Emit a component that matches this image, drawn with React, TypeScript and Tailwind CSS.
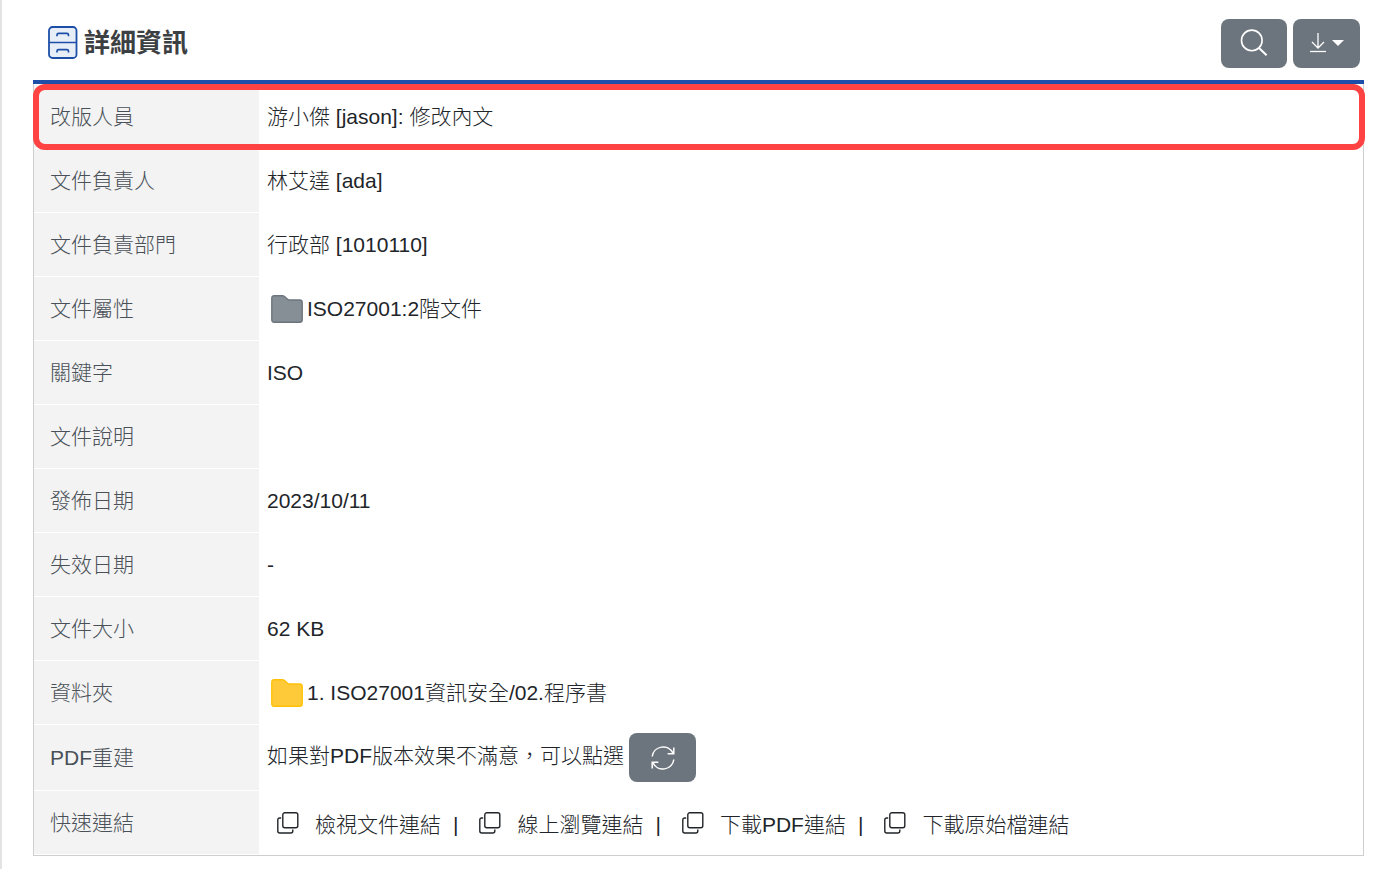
import React from "react";

type FolderProps = { fill: string; stroke: string };
type RowProps = { label: string; children?: React.ReactNode };

function Cabinet() {
  return (
    <svg width="30" height="34" viewBox="0 0 30 34" fill="none" aria-hidden="true">
      <rect x="1" y="1" width="27.5" height="31" rx="3.5" fill="#e8eef8" stroke="#1d4fa8" strokeWidth="1.8" />
      <path d="M1 16.5h27.5" stroke="#1d4fa8" strokeWidth="1.5" />
      <path
        d="M9 10.2V9q0-1.6 1.6-1.6h8.3q1.6 0 1.6 1.6v1.2M9 26.5v-1.2q0-1.6 1.6-1.6h8.3q1.6 0 1.6 1.6v1.2"
        stroke="#1d4fa8"
        strokeWidth="1.7"
      />
    </svg>
  );
}

function Folder({ fill, stroke }: FolderProps) {
  return (
    <svg className="shrink-0" width="32" height="28" viewBox="0 0 32 28" aria-hidden="true">
      <path
        d="M.8 3.2Q.8.7 3.3.7h8q1.3 0 2.2.8l3.1 2.7q.9.8 2.2.8h9.9q2.5 0 2.5 2.5v17.3q0 2.5-2.5 2.5H3.3Q.8 27.3.8 24.8z"
        fill={fill}
        stroke={stroke}
        strokeWidth="1.4"
      />
    </svg>
  );
}

function Copy() {
  return (
    <svg className="mb-1 shrink-0" width="22" height="22" viewBox="0 0 22 22" fill="none" stroke="#212529" strokeWidth="1.4" aria-hidden="true">
      <rect x="5.8" y=".8" width="15" height="15" rx="2" />
      <path d="M4.2 6H2.8Q.8 6 .8 8v11q0 2 2 2h11q2 0 2-2v-1.4" />
    </svg>
  );
}

function Row({ label, children }: RowProps) {
  return (
    <tr>
      <th
        scope="row"
        className="h-16 w-[225px] px-4 text-left font-light text-[#495057] bg-[#f3f3f3] border-b border-white"
      >
        {label}
      </th>
      <td className="h-16 px-2 border-b border-white">{children}</td>
    </tr>
  );
}

const links = ["檢視文件連結", "線上瀏覽連結", "下載PDF連結", "下載原始檔連結"];

function App() {
  return (
    <div
      lang="zh-Hant"
      className="min-h-screen border-l-2 border-[#e3e3e3] bg-white pl-[31px] pr-9 text-[21px] leading-8 font-light text-[#212529] font-['Liberation_Sans','Noto_Sans_CJK_TC',sans-serif]"
    >
      <header className="flex h-[84px] items-center justify-between border-b-4 border-[#1d4fa8] pl-[15px] pr-1">
        <h1 className="flex items-center gap-1.5 pt-1.5 text-[26px] font-bold text-[#3c4043]">
          <Cabinet />
          詳細資訊
        </h1>
        <div className="flex gap-1.5 pt-1.5">
          <button aria-label="搜尋" className="flex h-[49px] w-[66px] items-center justify-center rounded-lg bg-[#6c757d]">
            <svg width="28" height="28" viewBox="0 0 28 28" fill="none" stroke="white" strokeWidth="1.6">
              <circle cx="11.8" cy="11.4" r="10.3" />
              <path d="m19 19 7.6 7.2" strokeWidth="2" />
            </svg>
          </button>
          <button aria-label="下載" className="flex h-[49px] w-[67px] items-center justify-center gap-1 rounded-lg bg-[#6c757d]">
            <svg width="18" height="20" viewBox="0 0 18 20" fill="none" stroke="white" strokeWidth="1.3">
              <path d="M8 0v15M2 9l6 6 6-6" />
              <path d="M0 18.5h16" />
            </svg>
            <svg width="12" height="6" viewBox="0 0 12 6" fill="white">
              <path d="M0 0h12L6 6z" />
            </svg>
          </button>
        </div>
      </header>

      <div className="relative border-x border-b border-[#cfcfcf] pt-px">
        <table className="w-full border-separate border-spacing-0">
          <tbody>
            <Row label="改版人員">游小傑 [jason]: 修改內文</Row>
            <Row label="文件負責人">林艾達 [ada]</Row>
            <Row label="文件負責部門">行政部 [1010110]</Row>
            <Row label="文件屬性">
              <div className="flex items-center gap-1 pl-1">
                <Folder fill="#868e96" stroke="#6c757d" />
                ISO27001:2階文件
              </div>
            </Row>
            <Row label="關鍵字">ISO</Row>
            <Row label="文件說明" />
            <Row label="發佈日期">2023/10/11</Row>
            <Row label="失效日期">-</Row>
            <Row label="文件大小">62 KB</Row>
            <Row label="資料夾">
              <div className="flex items-center gap-1 pl-1">
                <Folder fill="#ffca3a" stroke="#ffc107" />
                1. ISO27001資訊安全/02.程序書
              </div>
            </Row>
            <Row label="PDF重建">
              <div className="flex items-center gap-[5px] py-2">
                <span className="pb-1">如果對PDF版本效果不滿意，可以點選</span>
                <button aria-label="重建PDF" className="flex h-[49px] w-[67px] items-center justify-center rounded-lg bg-[#6c757d]">
                  <svg width="24" height="24" viewBox="0 0 24 24" fill="none" stroke="white" strokeWidth="1.5">
                    <path d="M1.2 10.5A11 11 0 0 1 22 7.2M22.8 13.5A11 11 0 0 1 2 16.8" />
                    <path d="M22.8 1.5v6.2h-6.2M1.2 22.5v-6.2h6.2" />
                  </svg>
                </button>
              </div>
            </Row>
            <Row label="快速連結">
              <div className="flex items-center pl-2.5 pt-1">
                {links.map((link, i) => (
                  <React.Fragment key={link}>
                    {i > 0 && <span className="ml-3 mr-[21px]">|</span>}
                    <a href="#" className="flex items-center gap-4">
                      <Copy />
                      {link}
                    </a>
                  </React.Fragment>
                ))}
              </div>
            </Row>
          </tbody>
        </table>
        {/* highlight on the revision row */}
        <div className="pointer-events-none absolute top-0 -left-px -right-0.5 h-[66px] rounded-xl border-6 border-[#ff4242]" />
      </div>
    </div>
  );
}

export default App;
